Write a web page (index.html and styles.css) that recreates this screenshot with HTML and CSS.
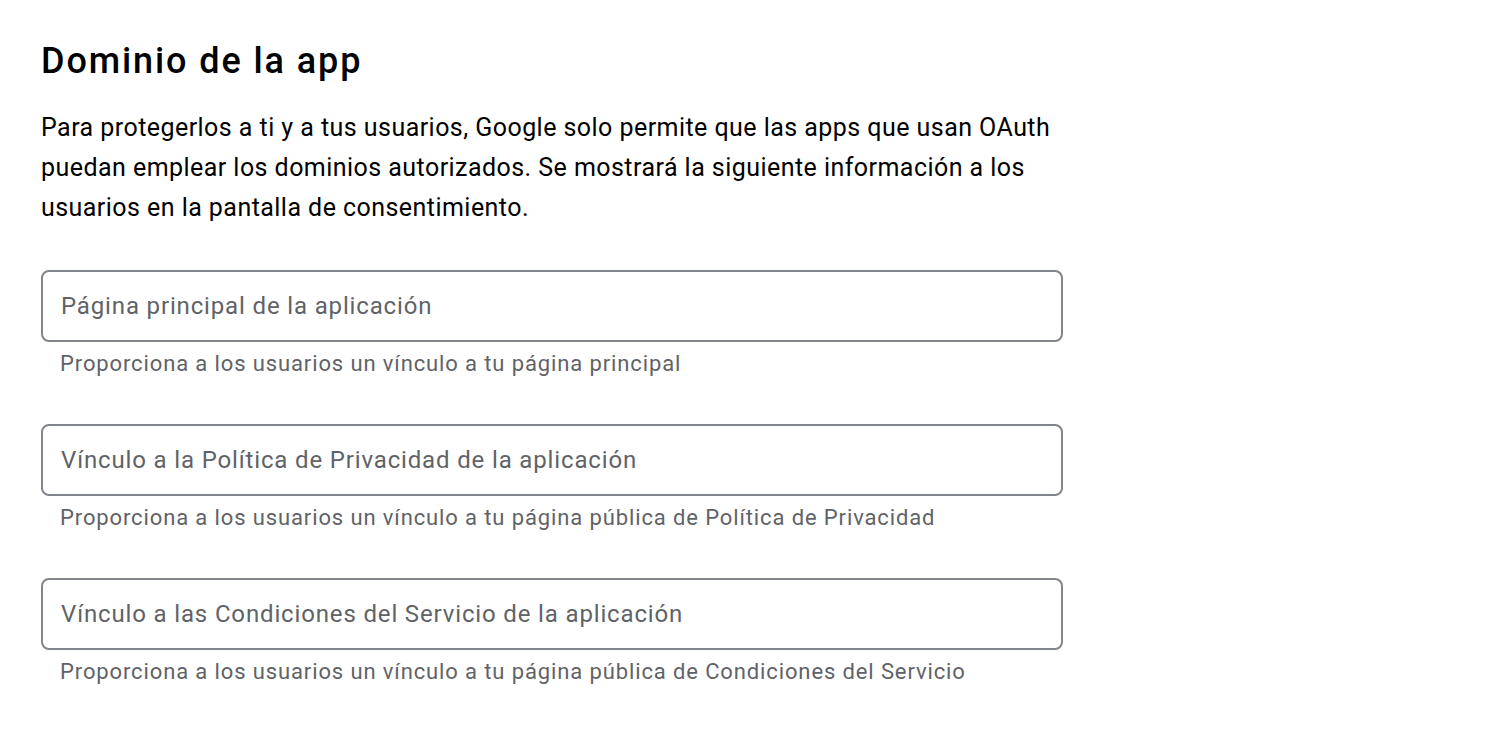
FILE: index.html
```html
<!DOCTYPE html>
<html lang="es">
<head>
<meta charset="utf-8">
<link rel="stylesheet" href="styles.css">
</head>
<body>
<main class="section">
  <h1 class="title">Dominio de la app</h1>
  <p class="intro">Para protegerlos a ti y a tus usuarios, Google solo permite que las apps que usan OAuth puedan emplear los dominios autorizados. Se mostrará la siguiente información a los usuarios en la pantalla de consentimiento.</p>
  <div class="fields">
    <div class="field">
      <div class="input"><span class="placeholder">Página principal de la aplicación</span></div>
      <div class="hint">Proporciona a los usuarios un vínculo a tu página principal</div>
    </div>
    <div class="field">
      <div class="input"><span class="placeholder">Vínculo a la Política de Privacidad de la aplicación</span></div>
      <div class="hint">Proporciona a los usuarios un vínculo a tu página pública de Política de Privacidad</div>
    </div>
    <div class="field">
      <div class="input"><span class="placeholder">Vínculo a las Condiciones del Servicio de la aplicación</span></div>
      <div class="hint">Proporciona a los usuarios un vínculo a tu página pública de Condiciones del Servicio</div>
    </div>
  </div>
</main>
</body>
</html>
```
FILE: styles.css
```css
html, body {
  margin: 0;
  padding: 0;
  background: #ffffff;
}
body {
  font-family: Roboto, "Liberation Sans", sans-serif;
  color: #202124;
}
.section {
  padding: 39px 0 0 41px;
  width: 1022px;
}
.title {
  margin: 0;
  font-size: 36px;
  line-height: 44px;
  font-weight: 500;
  letter-spacing: 1.9px;
  color: #000;
}
.intro {
  margin: 25px 0 0;
  font-size: 25px;
  line-height: 40px;
  letter-spacing: 0.45px;
  color: #000;
  width: 1022px;
}
.fields {
  display: flex;
  flex-direction: column;
  margin-top: 42px;
}
.field {
  display: flex;
  flex-direction: column;
}
.input {
  box-sizing: border-box;
  height: 72px;
  border: 2px solid #80868b;
  border-radius: 8px;
  padding: 0 18px 1px;
  display: flex;
  align-items: center;
}
.placeholder {
  font-size: 24px;
  letter-spacing: 0.85px;
  color: #5f6368;
}
.hint {
  padding: 8px 19px 0;
  font-size: 22px;
  line-height: 28px;
  letter-spacing: 0.88px;
  color: #5f6368;
  height: 74px;
}
```
